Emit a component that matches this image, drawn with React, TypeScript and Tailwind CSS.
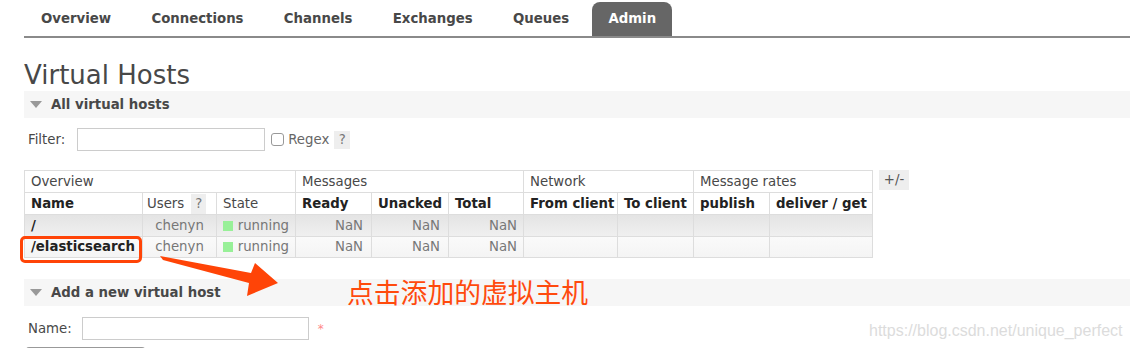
import React from 'react';

const tabs = ['Overview', 'Connections', 'Channels', 'Exchanges', 'Queues', 'Admin'];

const colWidths = [118, 74, 79, 76, 77, 75, 94, 76, 76, 103];

const rows = [
  { name: '/', users: 'chenyn', state: 'running', odd: true },
  { name: '/elasticsearch', users: 'chenyn', state: 'running', odd: false },
];

function Tri() {
  return (
    <svg width="12" height="7" viewBox="0 0 12 7" className="mr-[9px]">
      <polygon points="0,0 12,0 6,7" fill="#999" />
    </svg>
  );
}

function SectionBar({ title }: { title: string }) {
  return (
    <div className="ml-[24px] flex h-[27px] items-center bg-[#f6f6f6] pl-[6px] text-[13.3px] font-bold text-[#484848]">
      <Tri />
      {title}
    </div>
  );
}

const th = 'whitespace-nowrap border border-[#ddd] px-[6px] text-left font-bold text-[#222] h-[22px]';
const grp = 'whitespace-nowrap border border-[#ddd] px-[6px] text-left font-normal text-[#484848] h-[22px]';

export default function App() {
  return (
    <div
      className="relative h-[348px] w-[1130px] overflow-hidden bg-white text-[13.3px] text-[#484848]"
      style={{ fontFamily: '"DejaVu Sans", Verdana, sans-serif' }}
    >
      {/* nav */}
      <div className="ml-[24px] flex h-[38px] items-end border-b-2 border-[#8a8a8a] pt-[2px]">
        <div className="flex gap-[6.3px]">
          {tabs.map((t) => (
            <div
              key={t}
              className={
                t === 'Admin'
                  ? 'flex h-[34px] items-center rounded-t-[8px] bg-[#666] px-[16px] font-bold text-white'
                  : 'flex h-[34px] items-center px-[17px] font-bold text-[#484848]'
              }
            >
              {t}
            </div>
          ))}
        </div>
      </div>

      <h1 className="ml-[24px] mt-[22px] h-[31px] text-[26px] leading-[31px] font-normal text-[#484848]">
        Virtual Hosts
      </h1>

      <SectionBar title="All virtual hosts" />

      {/* filter */}
      <div className="ml-[28px] mt-[10px] flex h-[23px] items-center">
        <span>Filter:</span>
        <div className="ml-[12px] h-[23px] w-[188px] border border-[#ccc] bg-white" />
        <div className="ml-[6px] h-[13px] w-[13px] rounded-[3px] border border-[#999] bg-white" />
        <span className="ml-[4px] text-[#666]">Regex</span>
        <span className="ml-[5px] flex h-[18px] w-[16px] items-center justify-center bg-[#eee] text-[#777]">?</span>
      </div>

      {/* table */}
      <div className="ml-[24px] mt-[19px] flex items-start">
        <table className="w-[848px] table-fixed border-collapse">
          <colgroup>
            {colWidths.map((w, i) => (
              <col key={i} style={{ width: w }} />
            ))}
          </colgroup>
          <thead>
            <tr className="h-[22px]">
              <th colSpan={3} className={grp}>Overview</th>
              <th colSpan={3} className={grp}>Messages</th>
              <th colSpan={2} className={grp}>Network</th>
              <th colSpan={2} className={grp}>Message rates</th>
            </tr>
            <tr className="h-[22px]">
              <th className={th}>Name</th>
              <th className="h-[22px] whitespace-nowrap border border-[#ddd] pl-[4px] text-left font-normal text-[#484848]">
                <span className="flex items-center">
                  Users
                  <span className="ml-[7px] flex h-[20px] w-[15px] items-center justify-center bg-[#eee] text-[#777]">?</span>
                </span>
              </th>
              <th className="h-[22px] border border-[#ddd] px-[6px] text-left font-normal text-[#484848]">State</th>
              <th className={th}>Ready</th>
              <th className={th}>Unacked</th>
              <th className={th}>Total</th>
              <th className={`${th} px-[4px]`}>From client</th>
              <th className={`${th} px-[4px]`}>To client</th>
              <th className={th}>publish</th>
              <th className={th}>deliver / get</th>
            </tr>
          </thead>
          <tbody>
            {rows.map((r) => (
              <tr
                key={r.name}
                className={
                  r.odd
                    ? 'h-[22px] bg-gradient-to-b from-[#e4e4e4] to-[#f0f0f0]'
                    : 'h-[21px] bg-gradient-to-b from-[#fafafa] to-[#f4f4f4]'
                }
              >
                <td className="whitespace-nowrap border border-[#ddd] px-[6px] font-bold text-[#222]">{r.name}</td>
                <td className="border border-[#ddd] px-[6px] text-center text-[#777]">{r.users}</td>
                <td className="whitespace-nowrap border border-[#ddd] px-[6px] text-[#777]">
                  <span className="flex items-center">
                    <span className="mr-[5px] inline-block h-[10px] w-[10px] bg-[#98f098]" />
                    {r.state}
                  </span>
                </td>
                <td className="border border-[#ddd] px-[8px] text-right text-[#777]">NaN</td>
                <td className="border border-[#ddd] px-[8px] text-right text-[#777]">NaN</td>
                <td className="border border-[#ddd] px-[6px] text-right text-[#777]">NaN</td>
                <td className="border border-[#ddd]" />
                <td className="border border-[#ddd]" />
                <td className="border border-[#ddd]" />
                <td className="border border-[#ddd]" />
              </tr>
            ))}
          </tbody>
        </table>
        <span className="ml-[6px] flex h-[20px] w-[30px] items-center justify-center bg-[#eee] text-[#555]">+/-</span>
      </div>

      <div className="mt-[21px]">
        <SectionBar title="Add a new virtual host" />
      </div>

      {/* name */}
      <div className="ml-[28px] mt-[11px] flex h-[23px] items-center">
        <span>Name:</span>
        <div className="ml-[10px] h-[23px] w-[227px] border border-[#ccc] bg-white" />
        <span className="ml-[9px] text-[12px] text-[#f88]">*</span>
      </div>
      <div className="ml-[26px] mt-[7px] h-[4px] w-[119px] rounded-t-[3px] border border-b-0 border-[#999] bg-[#eee]" />

      {/* annotations */}
      <div className="absolute left-[20px] top-[236px] h-[27px] w-[122px] rounded-[5px] border-[3px] border-[#ff4407]" />
      <svg className="absolute left-0 top-0" width="1130" height="348">
        <polygon
          points="160,256 163,260 249,283 247,296 278,283 255,263 251,273"
          fill="#ff4407"
        />
      </svg>
      <div
        className="absolute left-[347px] top-[275px] text-[26.8px] leading-[34px] text-[#ff4a0d]"
        style={{ fontFamily: '"Noto Sans CJK SC", sans-serif' }}
      >
        点击添加的虚拟主机
      </div>
      <div
        className="absolute left-[869px] top-[319px] text-[16px] text-[#dcdcdc]"
        style={{ fontFamily: '"Liberation Sans", Arial, sans-serif' }}
      >
        https://blog.csdn.net/unique_perfect
      </div>
    </div>
  );
}
